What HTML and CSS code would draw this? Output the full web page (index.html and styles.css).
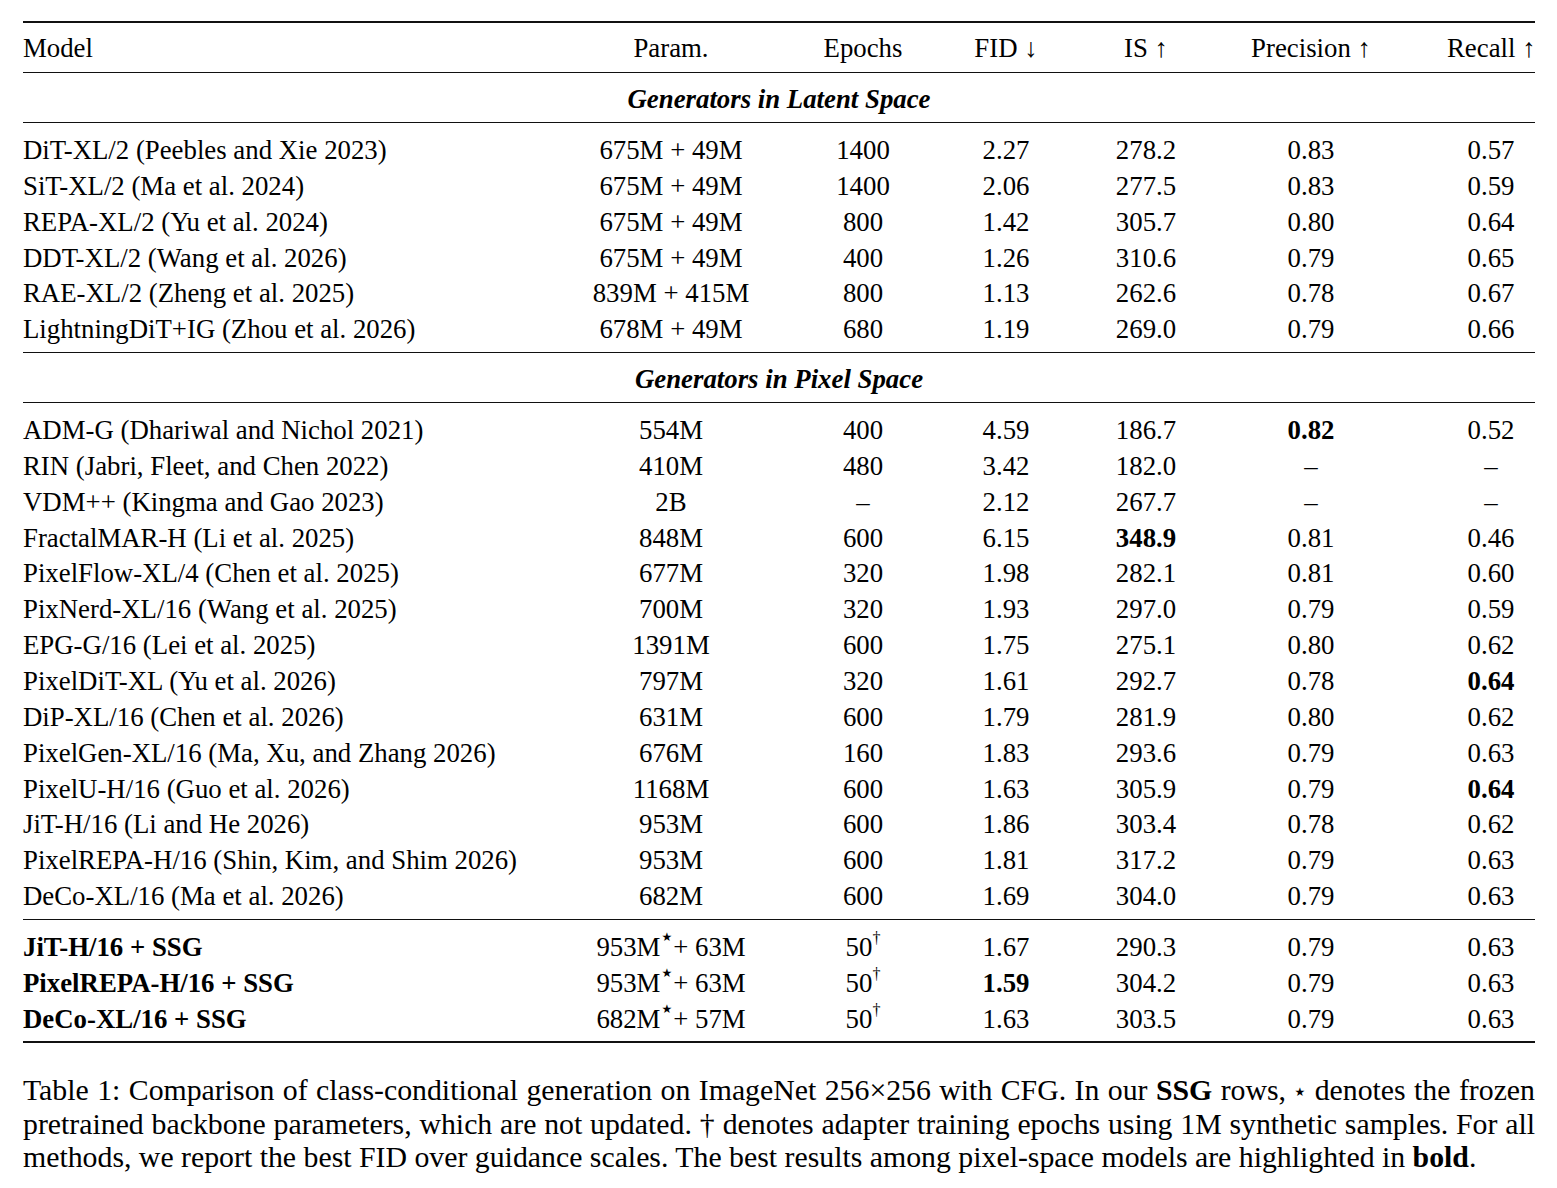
FILE: index.html
```html
<!DOCTYPE html>
<html lang="en">
<head>
  <meta charset="UTF-8" />
  <title>Table 1: Class-conditional generation on ImageNet 256×256</title>
  <link rel="stylesheet" href="styles.css">
</head>
<body>
  <div class="results">
    <div class="row head">
      <div>Model</div><div>Param.</div><div>Epochs</div><div>FID ↓</div><div>IS ↑</div><div>Precision ↑</div><div>Recall ↑</div>
    </div>

    <div class="section">Generators in Latent Space</div>
    <div class="group">
      <div class="row"><div>DiT-XL/2 (Peebles and Xie 2023)</div><div>675M + 49M</div><div>1400</div><div>2.27</div><div>278.2</div><div>0.83</div><div>0.57</div></div>
      <div class="row"><div>SiT-XL/2 (Ma et al. 2024)</div><div>675M + 49M</div><div>1400</div><div>2.06</div><div>277.5</div><div>0.83</div><div>0.59</div></div>
      <div class="row"><div>REPA-XL/2 (Yu et al. 2024)</div><div>675M + 49M</div><div>800</div><div>1.42</div><div>305.7</div><div>0.80</div><div>0.64</div></div>
      <div class="row"><div>DDT-XL/2 (Wang et al. 2026)</div><div>675M + 49M</div><div>400</div><div>1.26</div><div>310.6</div><div>0.79</div><div>0.65</div></div>
      <div class="row"><div>RAE-XL/2 (Zheng et al. 2025)</div><div>839M + 415M</div><div>800</div><div>1.13</div><div>262.6</div><div>0.78</div><div>0.67</div></div>
      <div class="row"><div>LightningDiT+IG (Zhou et al. 2026)</div><div>678M + 49M</div><div>680</div><div>1.19</div><div>269.0</div><div>0.79</div><div>0.66</div></div>
    </div>

    <div class="section">Generators in Pixel Space</div>
    <div class="group">
      <div class="row"><div>ADM-G (Dhariwal and Nichol 2021)</div><div>554M</div><div>400</div><div>4.59</div><div>186.7</div><div class="best">0.82</div><div>0.52</div></div>
      <div class="row"><div>RIN (Jabri, Fleet, and Chen 2022)</div><div>410M</div><div>480</div><div>3.42</div><div>182.0</div><div>–</div><div>–</div></div>
      <div class="row"><div>VDM++ (Kingma and Gao 2023)</div><div>2B</div><div>–</div><div>2.12</div><div>267.7</div><div>–</div><div>–</div></div>
      <div class="row"><div>FractalMAR-H (Li et al. 2025)</div><div>848M</div><div>600</div><div>6.15</div><div class="best">348.9</div><div>0.81</div><div>0.46</div></div>
      <div class="row"><div>PixelFlow-XL/4 (Chen et al. 2025)</div><div>677M</div><div>320</div><div>1.98</div><div>282.1</div><div>0.81</div><div>0.60</div></div>
      <div class="row"><div>PixNerd-XL/16 (Wang et al. 2025)</div><div>700M</div><div>320</div><div>1.93</div><div>297.0</div><div>0.79</div><div>0.59</div></div>
      <div class="row"><div>EPG-G/16 (Lei et al. 2025)</div><div>1391M</div><div>600</div><div>1.75</div><div>275.1</div><div>0.80</div><div>0.62</div></div>
      <div class="row"><div>PixelDiT-XL (Yu et al. 2026)</div><div>797M</div><div>320</div><div>1.61</div><div>292.7</div><div>0.78</div><div class="best">0.64</div></div>
      <div class="row"><div>DiP-XL/16 (Chen et al. 2026)</div><div>631M</div><div>600</div><div>1.79</div><div>281.9</div><div>0.80</div><div>0.62</div></div>
      <div class="row"><div>PixelGen-XL/16 (Ma, Xu, and Zhang 2026)</div><div>676M</div><div>160</div><div>1.83</div><div>293.6</div><div>0.79</div><div>0.63</div></div>
      <div class="row"><div>PixelU-H/16 (Guo et al. 2026)</div><div>1168M</div><div>600</div><div>1.63</div><div>305.9</div><div>0.79</div><div class="best">0.64</div></div>
      <div class="row"><div>JiT-H/16 (Li and He 2026)</div><div>953M</div><div>600</div><div>1.86</div><div>303.4</div><div>0.78</div><div>0.62</div></div>
      <div class="row"><div>PixelREPA-H/16 (Shin, Kim, and Shim 2026)</div><div>953M</div><div>600</div><div>1.81</div><div>317.2</div><div>0.79</div><div>0.63</div></div>
      <div class="row"><div>DeCo-XL/16 (Ma et al. 2026)</div><div>682M</div><div>600</div><div>1.69</div><div>304.0</div><div>0.79</div><div>0.63</div></div>
    </div>

    <div class="group last">
      <div class="row"><div class="best">JiT-H/16 + SSG</div><div>953M<sup class="star">★</sup>+ 63M</div><div>50<sup>†</sup></div><div>1.67</div><div>290.3</div><div>0.79</div><div>0.63</div></div>
      <div class="row"><div class="best">PixelREPA-H/16 + SSG</div><div>953M<sup class="star">★</sup>+ 63M</div><div>50<sup>†</sup></div><div class="best">1.59</div><div>304.2</div><div>0.79</div><div>0.63</div></div>
      <div class="row"><div class="best">DeCo-XL/16 + SSG</div><div>682M<sup class="star">★</sup>+ 57M</div><div>50<sup>†</sup></div><div>1.63</div><div>303.5</div><div>0.79</div><div>0.63</div></div>
    </div>
  </div>

  <div class="caption">
    <p>Table 1: Comparison of class-conditional generation on ImageNet 256×256 with CFG. In our <b>SSG</b> rows, <span class="star-inline">★</span> denotes the frozen</p>
    <p>pretrained backbone parameters, which are not updated. † denotes adapter training epochs using 1M synthetic samples. For all</p>
    <p class="end">methods, we report the best FID over guidance scales. The best results among pixel-space models are highlighted in <b>bold</b>.</p>
  </div>
</body>
</html>
```

FILE: styles.css
```css
* { box-sizing: border-box; }

body {
  margin: 0;
  padding: 21px 22px 0 23px;
  background: #fff;
  color: #000;
  font-family: "Liberation Serif", "Times New Roman", serif;
  font-size: 26.8px;
}

.results {
  width: 1512px;
  border-top: 2px solid #111;
  border-bottom: 2px solid #111;
}

.row {
  display: grid;
  grid-template-columns: 538px 220px 164px 122px 158px 172px 138px;
  align-items: center;
  height: 35.85px;
  white-space: nowrap;
}

.row > div {
  text-align: center;
  padding-top: 5px;
}
.row > div:first-child { text-align: left; }
.row > div:last-child { padding-left: 50px; }

.row.head {
  height: 50px;
  border-bottom: 1px solid #111;
}

.row.head > div { padding-top: 2px; }

.section {
  height: 50px;
  padding-top: 4px;
  display: flex;
  align-items: center;
  justify-content: center;
  font-weight: bold;
  font-style: italic;
  border-bottom: 1px solid #111;
}

.group {
  padding: 7px 0;
  border-bottom: 1px solid #111;
}

.group.last { border-bottom: none; }

.best { font-weight: bold; }

sup {
  font-size: 0.6em;
  line-height: 0;
  vertical-align: 0.8em;
}

sup.star {
  font-family: "DejaVu Sans", sans-serif;
  font-size: 12px;
  vertical-align: 1.2em;
  margin: 0 1px;
}

.caption {
  width: 1512px;
  margin-top: 30px;
  font-size: 29.8px;
}

.caption p {
  margin: 0;
  height: 33.5px;
  line-height: 33.5px;
  white-space: nowrap;
  text-align: justify;
  text-align-last: justify;
}

.caption p.end { text-align-last: left; }

.star-inline {
  font-family: "DejaVu Sans", sans-serif;
  font-size: 12px;
  line-height: 0;
  vertical-align: 0.3em;
}
```
